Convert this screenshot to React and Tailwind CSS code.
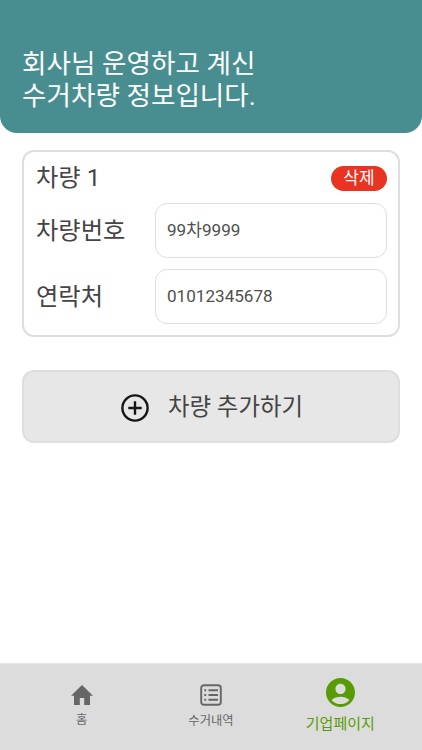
const FONT = "font-['Roboto','Noto_Sans_CJK_KR',sans-serif]";

function Field({ label, value }) {
  return (
    <div className="flex h-[55px] items-center">
      <span className="w-[119px] shrink-0 whitespace-nowrap pt-px text-[24.3px] leading-8 text-[#444]">{label}</span>
      <div className="flex h-full flex-1 items-center rounded-[12px] border border-[#dedede] bg-white pb-px pl-[11px] text-[17.1px] leading-6 text-[#505050]">
        {value}
      </div>
    </div>
  );
}

function PlusCircle() {
  return (
    <svg className="mt-[2px] h-7 w-7" viewBox="0 0 28 28" fill="none" stroke="#161616" strokeWidth="2.4">
      <circle cx="14" cy="14" r="12.6" />
      <path d="M14 7.3v13.4M7.3 14h13.4" />
    </svg>
  );
}

function HomeIcon() {
  return (
    <svg className="h-[20px] w-[22px]" viewBox="0 0 22 20" fill="#666">
      <path d="M11 0L22 10.800H19V20H13.200V13H8.800V20H3V10.800H0Z" />
    </svg>
  );
}

function ListIcon() {
  return (
    <svg className="h-[22px] w-[22px]" viewBox="0 0 22 22" fill="none" stroke="#666" strokeWidth="1.9">
      <rect x="1.200" y="1.200" width="19.600" height="19.600" rx="2.800" />
      <path d="M8.500 6.300H18M8.500 11H18M8.500 15.700H18" />
      <path d="M4.300 6.300H6.200M4.300 11H6.200M4.300 15.700H6.200" />
    </svg>
  );
}

function AccountIcon() {
  return (
    <svg className="h-[29px] w-[29px]" viewBox="2 2 20 20" fill="#589c05">
      <path d="M12 2C6.480 2 2 6.480 2 12s4.480 10 10 10 10-4.480 10-10S17.520 2 12 2zm0 4c1.930 0 3.500 1.570 3.500 3.500S13.930 13 12 13s-3.500-1.570-3.500-3.500S10.070 6 12 6zm0 14c-2.030 0-4.430-.820-6.140-2.880C7.550 15.800 9.680 15 12 15s4.450.800 6.140 2.120C16.430 19.180 14.030 20 12 20z" />
    </svg>
  );
}

export default function App() {
  return (
    <div className={`flex h-[750px] w-[422px] flex-col overflow-hidden bg-white ${FONT}`}>
      <header className="h-[133px] shrink-0 rounded-b-[17px] bg-[#488e90] pl-[22px] pt-[48px] text-white">
        <p className="text-[26.6px] leading-8">
          회사님 운영하고 계신
          <br />
          수거차량 정보입니다.
        </p>
      </header>

      <main className="flex flex-1 flex-col px-[22px] pt-[17px]">
        <section className="flex h-[187px] flex-col rounded-[12px] border-2 border-[#dedede] px-[11px] pt-[10px]">
          <div className="mb-[9px] flex h-8 items-center justify-between">
            <h2 className="pl-px text-[24.3px] leading-8 text-[#444]">차량 1</h2>
            <button className="flex h-[25px] w-[56px] items-center justify-center rounded-full bg-[#e93323] text-[17px] leading-6 text-white">
              삭제
            </button>
          </div>
          <div className="flex flex-col gap-[11px] pl-px">
            <Field label="차량번호" value="99차9999" />
            <Field label="연락처" value="01012345678" />
          </div>
        </section>

        <button className="mt-[33px] flex h-[73px] items-center justify-center gap-[19px] rounded-[12px] border-2 border-[#dedede] bg-[#e7e7e7] pl-[2px] text-[23.4px] leading-8 text-[#444]">
          <PlusCircle />
          <span>차량 추가하기</span>
        </button>
      </main>

      <nav className="flex h-[87px] shrink-0 border-t border-[#e6e6e6] bg-[#dcdcdc] px-[17px]">
        <a className="flex flex-1 flex-col items-center pt-[21px] text-[12.3px] leading-4 text-[#666]">
          <HomeIcon />
          <span className="mt-[7px]">홈</span>
        </a>
        <a className="flex flex-1 flex-col items-center pt-[20px] text-[12.3px] leading-4 text-[#666]">
          <ListIcon />
          <span className="mt-[7px]">수거내역</span>
        </a>
        <a className="flex flex-1 flex-col items-center pt-[14px] text-[15px] leading-5 text-[#589c05]">
          <AccountIcon />
          <span className="mt-[7px]">기업페이지</span>
        </a>
      </nav>
    </div>
  );
}
